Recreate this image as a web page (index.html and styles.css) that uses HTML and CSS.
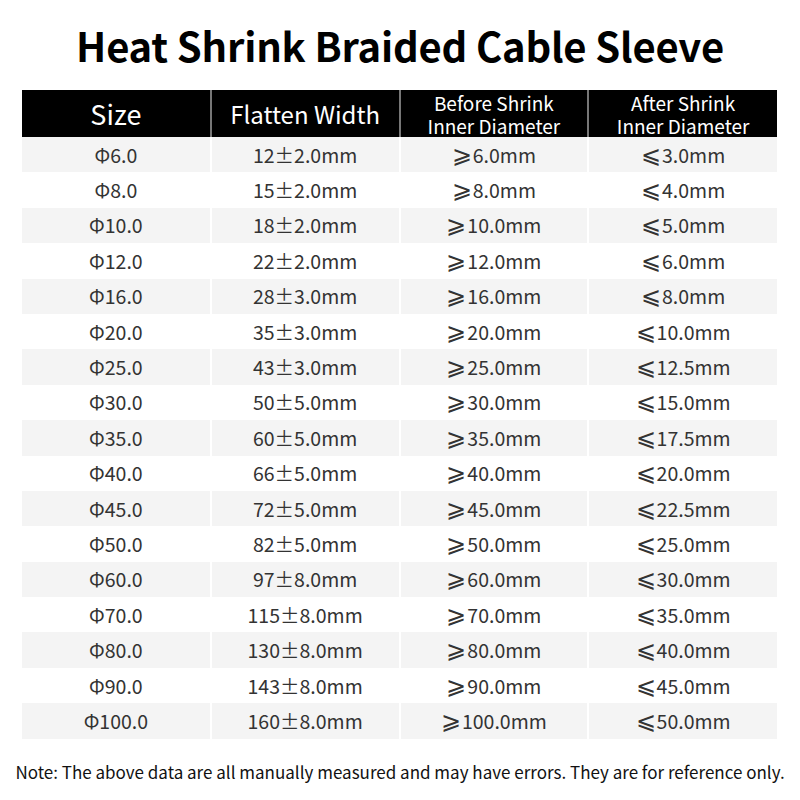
FILE: index.html
```html
<!DOCTYPE html>
<html lang="en">

<head>
    <meta charset="UTF-8">
    <meta name="viewport" content="width=device-width, initial-scale=1.0">
    <title>Heat Shrink Braided Cable Sleeve</title>
    <link rel="stylesheet" href="styles.css">
</head>

<body>
    <div class="page">
        <h1>Heat Shrink Braided Cable Sleeve</h1>

        <table class="spec">
            <thead>
                <tr>
                    <th class="big">Size</th>
                    <th class="mid">Flatten Width</th>
                    <th><span class="line">Before Shrink</span><span class="line">Inner Diameter</span></th>
                    <th><span class="line">After Shrink</span><span class="line">Inner Diameter</span></th>
                </tr>
            </thead>
            <tbody>
                <tr><td>Φ6.0</td><td>12±2.0mm</td><td><span class="sym">⩾</span>6.0mm</td><td><span class="sym">⩽</span>3.0mm</td></tr>
                <tr><td>Φ8.0</td><td>15±2.0mm</td><td><span class="sym">⩾</span>8.0mm</td><td><span class="sym">⩽</span>4.0mm</td></tr>
                <tr><td>Φ10.0</td><td>18±2.0mm</td><td><span class="sym">⩾</span>10.0mm</td><td><span class="sym">⩽</span>5.0mm</td></tr>
                <tr><td>Φ12.0</td><td>22±2.0mm</td><td><span class="sym">⩾</span>12.0mm</td><td><span class="sym">⩽</span>6.0mm</td></tr>
                <tr><td>Φ16.0</td><td>28±3.0mm</td><td><span class="sym">⩾</span>16.0mm</td><td><span class="sym">⩽</span>8.0mm</td></tr>
                <tr><td>Φ20.0</td><td>35±3.0mm</td><td><span class="sym">⩾</span>20.0mm</td><td><span class="sym">⩽</span>10.0mm</td></tr>
                <tr><td>Φ25.0</td><td>43±3.0mm</td><td><span class="sym">⩾</span>25.0mm</td><td><span class="sym">⩽</span>12.5mm</td></tr>
                <tr><td>Φ30.0</td><td>50±5.0mm</td><td><span class="sym">⩾</span>30.0mm</td><td><span class="sym">⩽</span>15.0mm</td></tr>
                <tr><td>Φ35.0</td><td>60±5.0mm</td><td><span class="sym">⩾</span>35.0mm</td><td><span class="sym">⩽</span>17.5mm</td></tr>
                <tr><td>Φ40.0</td><td>66±5.0mm</td><td><span class="sym">⩾</span>40.0mm</td><td><span class="sym">⩽</span>20.0mm</td></tr>
                <tr><td>Φ45.0</td><td>72±5.0mm</td><td><span class="sym">⩾</span>45.0mm</td><td><span class="sym">⩽</span>22.5mm</td></tr>
                <tr><td>Φ50.0</td><td>82±5.0mm</td><td><span class="sym">⩾</span>50.0mm</td><td><span class="sym">⩽</span>25.0mm</td></tr>
                <tr><td>Φ60.0</td><td>97±8.0mm</td><td><span class="sym">⩾</span>60.0mm</td><td><span class="sym">⩽</span>30.0mm</td></tr>
                <tr><td>Φ70.0</td><td>115±8.0mm</td><td><span class="sym">⩾</span>70.0mm</td><td><span class="sym">⩽</span>35.0mm</td></tr>
                <tr><td>Φ80.0</td><td>130±8.0mm</td><td><span class="sym">⩾</span>80.0mm</td><td><span class="sym">⩽</span>40.0mm</td></tr>
                <tr><td>Φ90.0</td><td>143±8.0mm</td><td><span class="sym">⩾</span>90.0mm</td><td><span class="sym">⩽</span>45.0mm</td></tr>
                <tr><td>Φ100.0</td><td>160±8.0mm</td><td><span class="sym">⩾</span>100.0mm</td><td><span class="sym">⩽</span>50.0mm</td></tr>
            </tbody>
        </table>

        <p class="note">Note: The above data are all manually measured and may have errors. They are for reference only.</p>
    </div>
</body>

</html>
```

FILE: styles.css
```css
body {
    margin: 0;
    background-color: #fff;
    font-family: "Noto Sans CJK SC", "Noto Sans", sans-serif;
    color: #333;
}

.page {
    width: 800px;
    padding-top: 18px;
}

h1 {
    margin: 0;
    height: 54px;
    text-align: center;
    font-size: 40px;
    font-weight: 700;
    line-height: 54px;
    letter-spacing: -0.2px;
    color: #000;
}

.spec {
    width: 755px;
    margin: 18px 0 0 22px;
    border-collapse: collapse;
    table-layout: fixed;
}

.spec th {
    height: 47px;
    padding: 0;
    background-color: #000;
    color: #fff;
    font-weight: 400;
    font-size: 19px;
    line-height: 23px;
    border-left: 2px solid #777;
}

.spec th .line {
    display: block;
    height: 23px;
    line-height: 23px;
}

.spec th:first-child,
.spec td:first-child {
    border-left: none;
}

.spec th.big {
    font-size: 27px;
}

.spec th.mid {
    font-size: 24px;
}

.spec td {
    height: 35.4px;
    padding: 0;
    text-align: center;
    font-size: 19.5px;
    line-height: 24px;
    border-left: 2px solid #fff;
}

.spec td .sym {
    font-size: 23.5px;
    line-height: 0;
    margin-right: 1px;
}

.spec tbody tr:nth-child(odd) td {
    background-color: #f4f4f4;
}

.note {
    margin: 20px 0 0;
    text-align: center;
    font-size: 17px;
    color: #111;
}
```
